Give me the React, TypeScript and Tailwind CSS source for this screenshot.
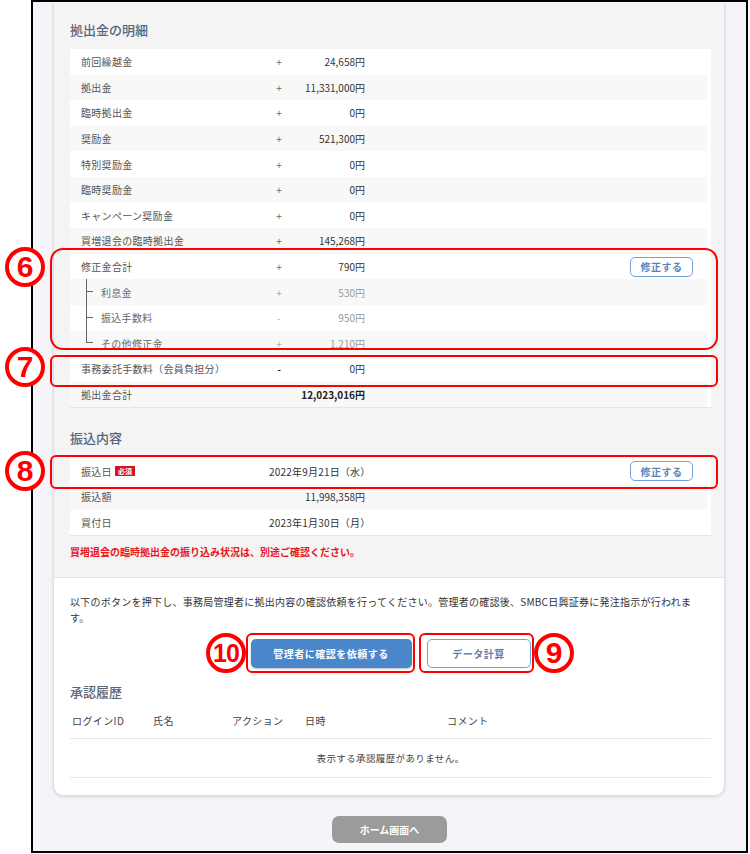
import React from 'react';

type Row = {
  label: string;
  sign: string;
  amount: string;
  edit?: boolean;
  sub?: 'mid' | 'last';
  darkSign?: boolean;
  bold?: boolean;
};

const rows: Row[] = [
  { label: '前回繰越金', sign: '+', amount: '24,658円' },
  { label: '拠出金', sign: '+', amount: '11,331,000円' },
  { label: '臨時拠出金', sign: '+', amount: '0円' },
  { label: '奨励金', sign: '+', amount: '521,300円' },
  { label: '特別奨励金', sign: '+', amount: '0円' },
  { label: '臨時奨励金', sign: '+', amount: '0円' },
  { label: 'キャンペーン奨励金', sign: '+', amount: '0円' },
  { label: '買増退会の臨時拠出金', sign: '+', amount: '145,268円' },
  { label: '修正金合計', sign: '+', amount: '790円', edit: true },
  { label: '利息金', sign: '+', amount: '530円', sub: 'mid' },
  { label: '振込手数料', sign: '-', amount: '950円', sub: 'mid' },
  { label: 'その他修正金', sign: '+', amount: '1,210円', sub: 'last' },
  { label: '事務委託手数料（会員負担分）', sign: '-', amount: '0円', darkSign: true },
  { label: '拠出金合計', sign: '', amount: '12,023,016円', bold: true },
];

function EditButton() {
  return (
    <div className="h-[20px] w-[63px] flex items-center justify-center rounded-[5px] border-[1.5px] border-[#73a2da] bg-white text-[10px] font-bold text-[#5d82b4] tracking-[0.05em]">
      修正する
    </div>
  );
}

function Circle({ n, x, y }: { n: string; x: number; y: number }) {
  return (
    <div
      className="absolute w-[40px] h-[40px] rounded-full border-[4px] border-[#ff0000] bg-white flex items-center justify-center"
      style={{ left: x - 20, top: y - 20 }}
    >
      <span
        className={
          "font-['Liberation_Sans',Arial,sans-serif] font-bold text-[#ff0000] leading-none " +
          (n.length > 1 ? 'text-[25px] tracking-[-1px]' : 'text-[30px]')
        }
      >
        {n}
      </span>
    </div>
  );
}

function Box({ l, t, r, b, radius }: { l: number; t: number; r: number; b: number; radius: number }) {
  return (
    <div
      className="absolute border-[2.5px] border-[#ff0000]"
      style={{ left: l, top: t, width: r - l, height: b - t, borderRadius: radius }}
    />
  );
}

export default function App() {
  return (
    <div className="relative w-[750px] h-[854px] bg-white font-['Noto_Sans_CJK_JP','Noto_Sans',sans-serif] overflow-hidden">
      <div className="ml-[31px] w-[717px] h-[853px] border-2 border-black bg-[#f4f4f9] overflow-hidden">
        {/* card */}
        <div className="ml-[20px] w-[672px] bg-white border-x border-b border-[#dcdfe6] rounded-b-[10px] shadow-[0_1px_3px_rgba(0,0,0,0.12)] overflow-hidden">
          <div className="bg-[#f4f4f4] pt-[18px] pl-[16px] pr-[13px] pb-[17px]">
            <div className="text-[13px] leading-[20px] text-[#56667b] font-medium mb-[9px]">拠出金の明細</div>
            <div className="bg-white pr-[4px] border-b border-[#e6e6e6]">
              {rows.map((r, i) => (
                <div
                  key={i}
                  className={'h-[25.6px] flex items-center pl-[11px] pr-[14px] ' + (i % 2 === 1 ? 'bg-[#f8f8f8]' : 'bg-white')}
                >
                  <div className="w-[188px] h-full flex items-center">
                    {r.sub ? (
                      <>
                        <div className="ml-[5px] w-[7px] self-stretch flex flex-col">
                          <div className="h-1/2 border-l border-b border-[#666]" />
                          <div className={'flex-1 ' + (r.sub === 'mid' ? 'border-l border-[#666]' : '')} />
                        </div>
                        <span className="ml-[8px] text-[10px] tracking-[0.03em] text-[#6a6a6a]">{r.label}</span>
                      </>
                    ) : (
                      <span className="text-[10px] tracking-[0.03em] text-[#555]">{r.label}</span>
                    )}
                  </div>
                  <div
                    className={
                      'w-[20px] text-center text-[10px] ' +
                      (r.darkSign ? 'text-[#222] font-bold' : r.sub ? 'text-[#aaa]' : 'text-[#666]')
                    }
                  >
                    {r.sign}
                  </div>
                  <div
                    className={
                      'w-[76px] text-right text-[10px] ' +
                      (r.bold ? 'font-bold text-[#222]' : r.sub ? 'text-[#9a9a9a]' : 'text-[#333]')
                    }
                  >
                    {r.amount}
                  </div>
                  <div className="flex-1" />
                  {r.edit && <EditButton />}
                </div>
              ))}
            </div>

            <div className="mt-[20px] text-[13px] leading-[20px] text-[#56667b] font-medium mb-[10px]">振込内容</div>
            <div className="bg-white pr-[4px] border-b border-[#e6e6e6]">
              <div className="h-[25.6px] flex items-center pl-[11px] pr-[14px] bg-white">
                <div className="w-[188px] flex items-center">
                  <span className="text-[10px] tracking-[0.03em] text-[#555]">振込日</span>
                  <span className="ml-[3px] px-[3px] bg-[#d7141d] text-white text-[7px] font-bold leading-[10px]">必須</span>
                </div>
                <div className="w-[96px] text-right text-[10px] text-[#333] whitespace-nowrap tracking-[0.02em]">2022年9月21日（水）</div>
                <div className="flex-1" />
                <EditButton />
              </div>
              <div className="h-[25.6px] flex items-center pl-[11px] pr-[14px] bg-[#f8f8f8]">
                <div className="w-[188px] text-[10px] tracking-[0.03em] text-[#555]">振込額</div>
                <div className="w-[96px] text-right text-[10px] text-[#333]">11,998,358円</div>
              </div>
              <div className="h-[25.6px] flex items-center pl-[11px] pr-[14px] bg-white">
                <div className="w-[188px] text-[10px] tracking-[0.03em] text-[#555]">買付日</div>
                <div className="w-[96px] text-right text-[10px] text-[#333] whitespace-nowrap tracking-[0.02em]">2023年1月30日（月）</div>
              </div>
            </div>
            <div className="mt-[8px] text-[10px] leading-[16px] font-bold text-[#e8161c]">
              買増退会の臨時拠出金の振り込み状況は、別途ご確認ください。
            </div>
          </div>

          <div className="border-t border-[#e4e4e8] pt-[16px] pl-[16px] pr-[13px] pb-[17px]">
            <p className="text-[10px] leading-[16px] text-[#333] tracking-[0.025em]">
              以下のボタンを押下し、事務局管理者に拠出内容の確認依頼を行ってください。管理者の確認後、SMBC日興証券に発注指示が行われま<br />す。
            </p>
            <div className="mt-[13px] flex justify-center gap-[15px]">
              <div className="w-[161px] h-[29px] rounded-[5px] bg-[#4a86ca] shadow-[0_1px_2px_rgba(0,0,0,0.25)] flex items-center justify-center text-white text-[10px] font-bold tracking-[0.05em]">
                管理者に確認を依頼する
              </div>
              <div className="w-[104px] h-[29px] rounded-[5px] border-[1.5px] border-[#73a2da] bg-white flex items-center justify-center text-[#5d82b4] text-[10px] font-bold tracking-[0.05em]">
                データ計算
              </div>
            </div>
            <div className="mt-[14px] text-[13px] leading-[20px] text-[#56667b] font-medium">承認履歴</div>
            <div className="h-[37px] flex items-center border-b border-[#e8e8e8] text-[10px] text-[#444] tracking-[0.04em]">
              <div className="w-[83px] pl-[2px]">ログインID</div>
              <div className="w-[79px]">氏名</div>
              <div className="w-[73px]">アクション</div>
              <div className="w-[142px]">日時</div>
              <div>コメント</div>
            </div>
            <div className="h-[39px] flex items-center justify-center border-b border-[#e8e8e8] text-[9.5px] text-[#444] tracking-[0.04em]">
              表示する承認履歴がありません。
            </div>
          </div>
        </div>

        <div className="mt-[20px] flex justify-center">
          <div className="w-[115px] h-[27px] rounded-[7px] bg-[#9b9b9b] flex items-center justify-center text-white text-[10px] font-bold">
            ホーム画面へ
          </div>
        </div>
      </div>

      {/* annotations */}
      <Box l={50} t={248} r={718} b={350} radius={13} />
      <Box l={50} t={355} r={718} b={387} radius={6} />
      <Box l={50} t={455} r={718} b={489} radius={6} />
      <Box l={246} t={633} r={415} b={673} radius={6} />
      <Box l={419} t={633} r={534} b={673} radius={6} />
      <Circle n="6" x={25} y={267} />
      <Circle n="7" x={25} y={367} />
      <Circle n="8" x={25} y={471} />
      <Circle n="10" x={226} y={653} />
      <Circle n="9" x={554} y={653} />
    </div>
  );
}
